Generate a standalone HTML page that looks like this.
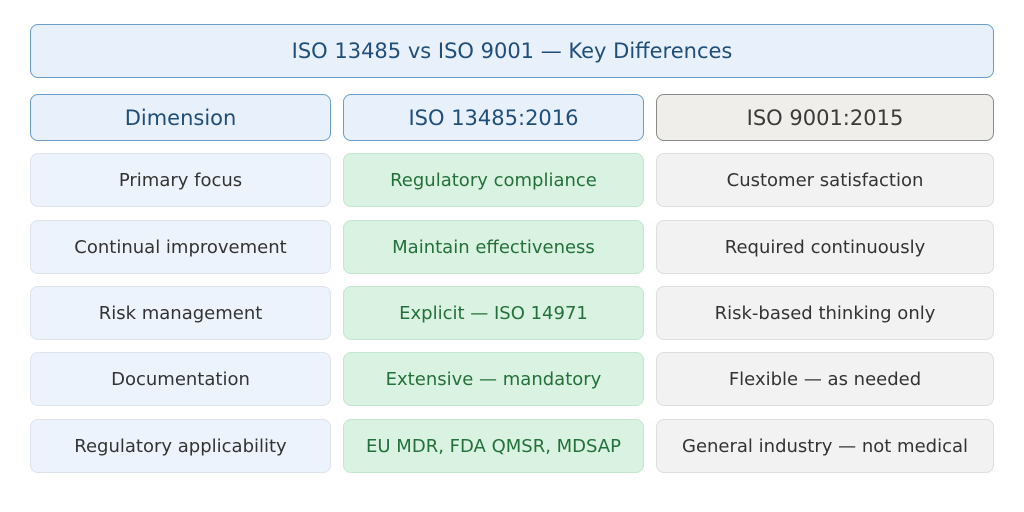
<!DOCTYPE html>
<html><head><meta charset="utf-8"><style>
body{margin:0;width:1024px;height:512px;background:#fff;font-family:"DejaVu Sans","Liberation Sans",sans-serif;position:relative;overflow:hidden}
.b{position:absolute;box-sizing:border-box;display:flex;align-items:center;justify-content:center;border-radius:8px;white-space:nowrap}
.t{left:30px;top:24px;width:964px;height:54px;background:#e8f0fb;border:1px solid #6c9ccb;color:#1f4e79;font-size:21px}
.h{top:94px;height:47px;font-size:21px}
.hb{background:#e8f0fb;border:1px solid #6c9ccb;color:#1f4e79}
.hg{background:#efeeea;border:1px solid #8a8a8a;color:#3a3a3a}
.c{height:54px;font-size:18px}
.c1{left:30px;width:301px;background:#edf3fc;border:1px solid #dde3ea;color:#333}
.c2{left:343px;width:301px;background:#d9f2e1;border:1px solid #c5e6cf;color:#23703a}
.c3{left:656px;width:338px;background:#f2f2f2;border:1px solid #dedede;color:#333}
</style></head><body>
<div class="b t">ISO 13485 vs ISO 9001 — Key Differences</div>
<div class="b h hb" style="left:30px;width:301px">Dimension</div>
<div class="b h hb" style="left:343px;width:301px">ISO 13485:2016</div>
<div class="b h hg" style="left:656px;width:338px">ISO 9001:2015</div>

<div class="b c c1" style="top:153px">Primary focus</div>
<div class="b c c2" style="top:153px">Regulatory compliance</div>
<div class="b c c3" style="top:153px">Customer satisfaction</div>

<div class="b c c1" style="top:220px">Continual improvement</div>
<div class="b c c2" style="top:220px">Maintain effectiveness</div>
<div class="b c c3" style="top:220px">Required continuously</div>

<div class="b c c1" style="top:286px">Risk management</div>
<div class="b c c2" style="top:286px">Explicit — ISO 14971</div>
<div class="b c c3" style="top:286px">Risk-based thinking only</div>

<div class="b c c1" style="top:352px">Documentation</div>
<div class="b c c2" style="top:352px">Extensive — mandatory</div>
<div class="b c c3" style="top:352px">Flexible — as needed</div>

<div class="b c c1" style="top:419px">Regulatory applicability</div>
<div class="b c c2" style="top:419px">EU MDR, FDA QMSR, MDSAP</div>
<div class="b c c3" style="top:419px">General industry — not medical</div>
</body></html>
